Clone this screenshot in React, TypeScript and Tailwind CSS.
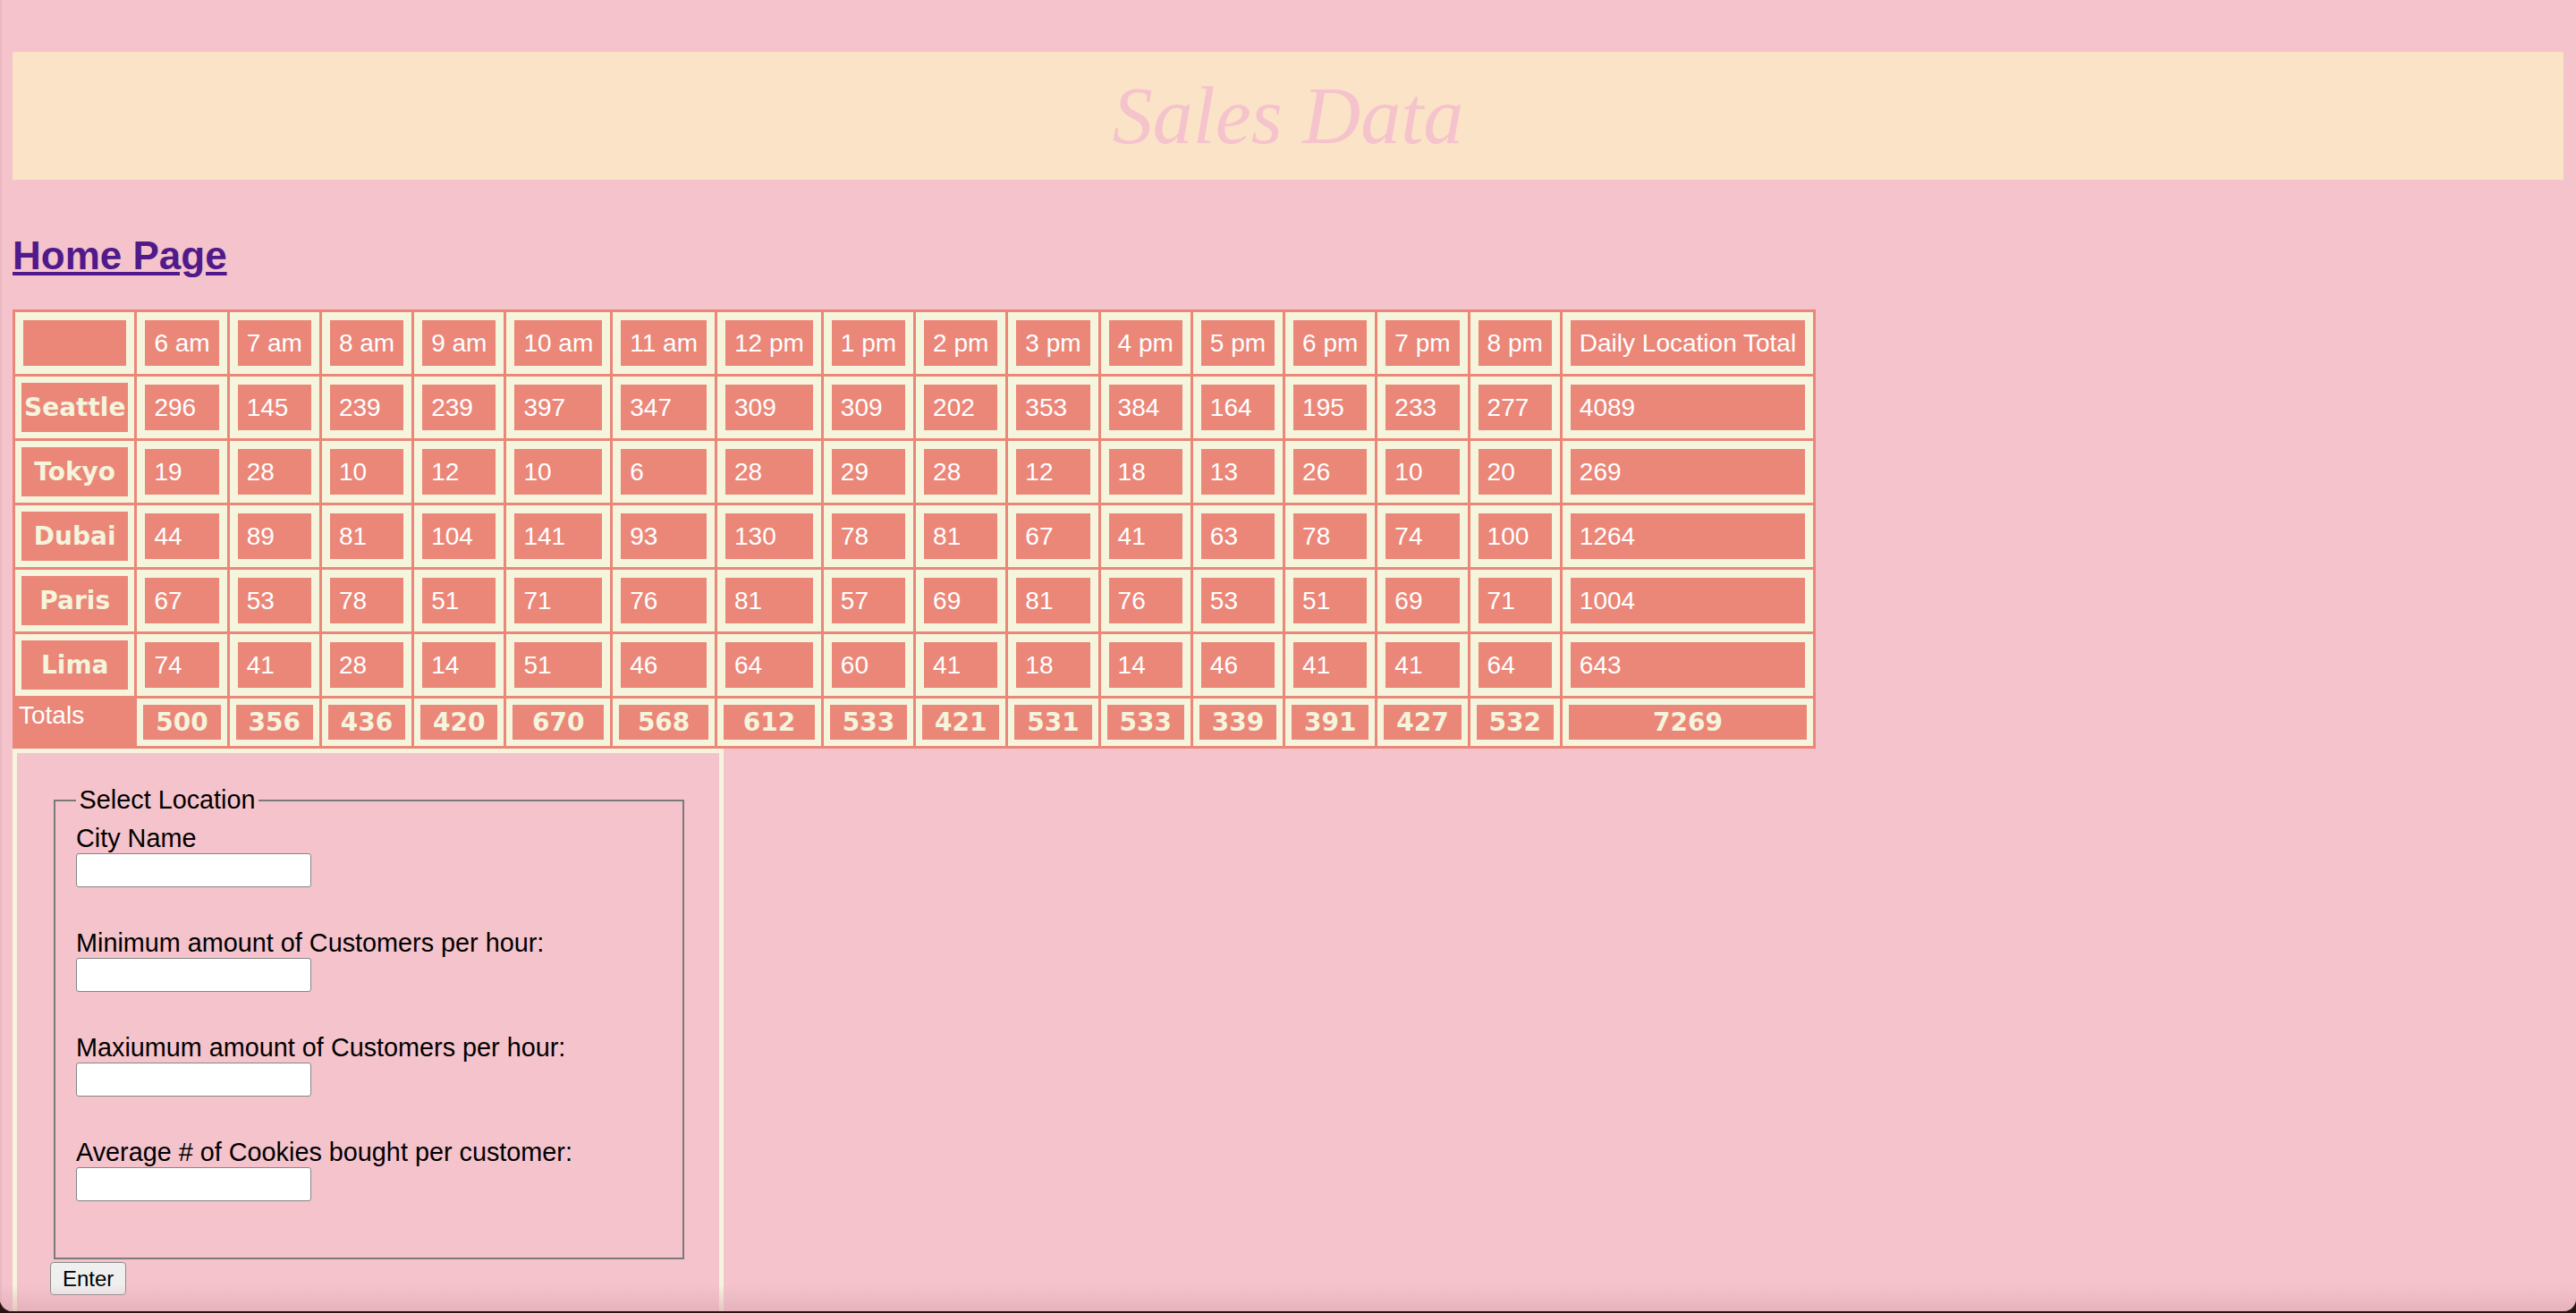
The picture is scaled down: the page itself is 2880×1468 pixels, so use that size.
import React from "react";

const hours = [
  "6 am",
  "7 am",
  "8 am",
  "9 am",
  "10 am",
  "11 am",
  "12 pm",
  "1 pm",
  "2 pm",
  "3 pm",
  "4 pm",
  "5 pm",
  "6 pm",
  "7 pm",
  "8 pm",
];

const stores = [
  { name: "Seattle", sales: [296, 145, 239, 239, 397, 347, 309, 309, 202, 353, 384, 164, 195, 233, 277] },
  { name: "Tokyo", sales: [19, 28, 10, 12, 10, 6, 28, 29, 28, 12, 18, 13, 26, 10, 20] },
  { name: "Dubai", sales: [44, 89, 81, 104, 141, 93, 130, 78, 81, 67, 41, 63, 78, 74, 100] },
  { name: "Paris", sales: [67, 53, 78, 51, 71, 76, 81, 57, 69, 81, 76, 53, 51, 69, 71] },
  { name: "Lima", sales: [74, 41, 28, 14, 51, 46, 64, 60, 41, 18, 14, 46, 41, 41, 64] },
];

const sum = (list: number[]) => list.reduce((a, b) => a + b, 0);

const hourTotals = hours.map((_, i) => sum(stores.map((s) => s.sales[i])));
const grandTotal = sum(stores.map((s) => sum(s.sales)));

const cell =
  "border-[9px] border-[#F5F4DC] bg-[#EA8779] px-[10px] py-[10px] text-left align-middle font-normal text-[28px] leading-[31px] text-white whitespace-nowrap";
const rowHead =
  "border-[7px] border-[#F5F4DC] bg-[#EA8779] px-[3px] py-[3px] text-center align-middle font-bold text-[28px] leading-[33px] text-[#F5F4DC] whitespace-nowrap font-['DejaVu_Sans',Verdana,sans-serif]";
const totalCell =
  "border-[7px] border-[#F5F4DC] bg-[#EA8779] px-[3px] py-[3px] text-center align-middle font-bold text-[28px] leading-[33px] text-[#F5F4DC] whitespace-nowrap font-['DejaVu_Sans',Verdana,sans-serif]";

const fields = [
  { id: "city", label: "City Name" },
  { id: "min", label: "Minimum amount of Customers per hour:" },
  { id: "max", label: "Maxiumum amount of Customers per hour:" },
  { id: "avg", label: "Average # of Cookies bought per customer:" },
];

export default function App() {
  return (
    <div className="h-screen overflow-hidden bg-[#2a1610]">
      <div className="relative h-[1466px] overflow-hidden rounded-b-[14px] bg-[#F5C3CB] px-[14px] pt-[58px] font-['Liberation_Sans',Arial,sans-serif] shadow-[inset_2px_0_0_#e9b8c0]">
        <header className="flex h-[143px] items-center justify-center bg-[#FBE3C7]">
          <h1 className="font-['Liberation_Serif',serif] text-[90px] italic leading-none text-[#F5C3CB]">
            Sales Data
          </h1>
        </header>

        <h2 className="mt-[60px] text-[44px] font-bold leading-[50px]">
          <a href="#" className="text-[#501A8A] underline">
            Home Page
          </a>
        </h2>

        <table className="mt-[35px] border-separate border-spacing-[3px] bg-[#EA8779]">
          <thead>
            <tr>
              <th className={cell}></th>
              {hours.map((h) => (
                <th key={h} className={cell}>
                  {h}
                </th>
              ))}
              <th className={cell}>Daily Location Total</th>
            </tr>
          </thead>
          <tbody>
            {stores.map((s) => (
              <tr key={s.name}>
                <th className={rowHead}>{s.name}</th>
                {s.sales.map((n, i) => (
                  <td key={i} className={cell}>
                    {n}
                  </td>
                ))}
                <td className={cell}>{sum(s.sales)}</td>
              </tr>
            ))}
            <tr>
              <td className="px-[4px] pt-[3px] align-top text-[28px] leading-[31px] text-white">
                Totals
              </td>
              {hourTotals.map((t, i) => (
                <td key={i} className={totalCell}>
                  {t}
                </td>
              ))}
              <td className={totalCell}>{grandTotal}</td>
            </tr>
          </tbody>
        </table>

        <form
          className="w-[795px] border-[5px] border-[#F5F4DC] pb-[40px] pl-[37px] pr-[35px] pt-[36px] text-black"
          onSubmit={(e) => e.preventDefault()}
        >
          <fieldset className="mx-[4px] border-2 border-[#7a7a7a] pb-[63px] pl-[23px] pr-[23px] pt-[10px]">
            <legend className="px-[3.6px] text-[28.8px] leading-[33px]">Select Location</legend>
            {fields.map((f, i) => (
              <div key={f.id} className={i < fields.length - 1 ? "mb-[46px]" : ""}>
                <label htmlFor={f.id} className="block text-[28.8px] leading-[33px]">
                  {f.label}
                </label>
                <input
                  id={f.id}
                  type="text"
                  className="block h-[38px] w-[263px] rounded-[3px] border border-[#858585] bg-white px-[4px] text-[24px]"
                />
              </div>
            ))}
          </fieldset>
          <button
            type="submit"
            className="mt-[3px] rounded-[4px] border border-[#8a8a8a] bg-[#EFEFEF] px-[13px] py-[3.5px] text-[24px] leading-[27.6px] text-black"
          >
            Enter
          </button>
        </form>

        <div className="pointer-events-none absolute inset-x-0 bottom-0 h-[30px] bg-gradient-to-b from-transparent to-[#dba8b1]/60"></div>
      </div>
    </div>
  );
}
